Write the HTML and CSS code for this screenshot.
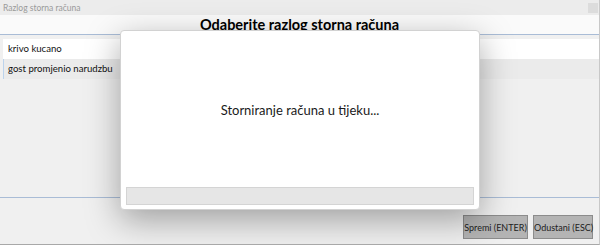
FILE: index.html
```html
<html>

<head>
  <title>Razlog storna računa</title>
  <link rel="stylesheet" href="styles.css">
</head>

<body>
  <div class="window">
    <div class="titlebar">
      <span class="titlebar-text">Razlog storna računa</span>
      <span class="close-btn"></span>
    </div>
    <div class="heading">Odaberite razlog storna računa</div>
    <div class="list">
      <div class="row">krivo kucano</div>
      <div class="row row-alt">gost promjenio narudzbu</div>
    </div>
    <div class="footer">
      <button class="btn btn-save">Spremi (ENTER)</button>
      <button class="btn btn-cancel">Odustani (ESC)</button>
    </div>

    <div class="modal">
      <div class="modal-text">Storniranje računa u tijeku...</div>
      <div class="progress"></div>
    </div>
  </div>
</body>

</html>
```

FILE: styles.css
```css
body {
  margin: 0;
  background-color: white;
  font-family: Lato, "Noto Sans", sans-serif;
}

.window {
  position: relative;
  width: 599px;
  height: 244px;
  border-right: 1px solid #c8c8c8;
  border-bottom: 1px solid #a8a8a8;
  background-color: #f0f0f0;
  display: flex;
  flex-direction: column;
  overflow: hidden;
}

.titlebar {
  height: 15px;
  background-color: #ececec;
  display: flex;
  align-items: center;
  justify-content: space-between;
  padding: 0 1px 0 3px;
}

.titlebar-text {
  font-size: 8.5px;
  color: #9a9a9a;
}

.close-btn {
  width: 10px;
  height: 10px;
  background-color: #dcdcdc;
}

.heading {
  height: 19px;
  background-color: #fafafa;
  text-align: center;
  font-size: 14.5px;
  font-weight: bold;
  line-height: 20px;
  color: #000;
}

.list {
  height: 158px;
  border-top: 1px solid #a9bcd6;
  border-bottom: 1px solid #a9bcd6;
  padding-top: 4px;
  background-color: #f0f0f0;
}

.row {
  height: 20px;
  line-height: 20px;
  margin-left: 3px;
  padding-left: 5px;
  font-size: 9.6px;
  color: #111;
  background-color: white;
}

.row-alt {
  background-color: #ebebeb;
  border-left: 1px solid #bcd3ec;
  padding-left: 4px;
}

.footer {
  flex: 1;
  display: flex;
  justify-content: flex-end;
  align-items: flex-start;
  gap: 5px;
  padding: 17px 6px 0 0;
}

.btn {
  height: 24px;
  padding: 0;
  border: 1px solid #8c8c8c;
  background-color: #b4b4b4;
  font-family: Lato, "Noto Sans", sans-serif;
  font-size: 9px;
  white-space: nowrap;
  color: #222;
}

.btn-save {
  width: 65px;
}

.btn-cancel {
  width: 60px;
}

.modal {
  position: absolute;
  left: 120px;
  top: 30px;
  width: 358px;
  height: 178px;
  background-color: white;
  border: 1px solid #d2d2d2;
  border-radius: 4px;
  box-shadow: 0 10px 34px rgba(0, 0, 0, 0.34);
  display: flex;
  flex-direction: column;
  align-items: center;
}

.modal-text {
  margin-top: 71px;
  font-size: 13px;
  color: #1a1a1a;
}

.progress {
  margin-top: auto;
  margin-bottom: 4px;
  width: 346px;
  height: 16px;
  background-color: #e6e6e6;
  border: 1px solid #d4d4d4;
}
```
